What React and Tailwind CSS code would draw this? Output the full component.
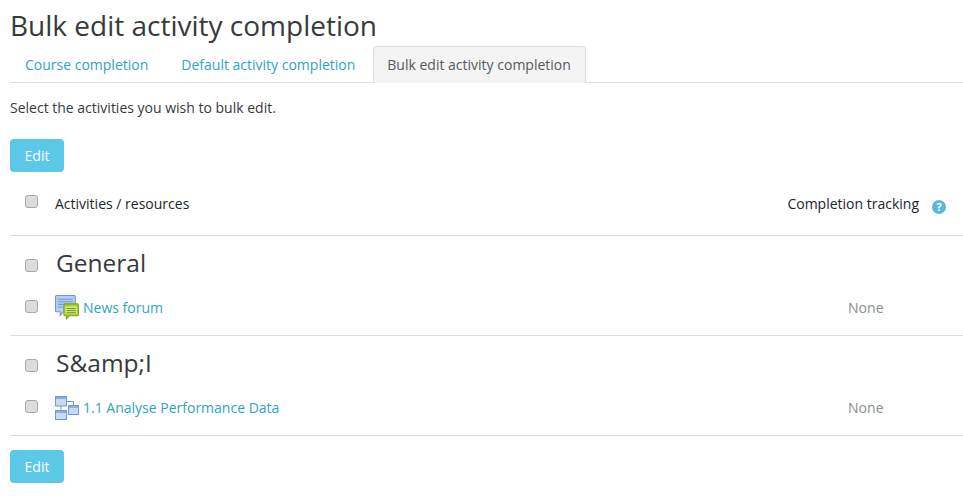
const Check = () => (
  <input type="checkbox" className="appearance-none block w-[13px] h-[13px] rounded-[3px] border border-[#a8a8a8] bg-[#dcdcdc] shrink-0" />
);

const ForumIcon = () => (
  <svg width="25" height="25" viewBox="0 0 24 24" className="shrink-0">
    <path d="M1.500 0.500h17a1 1 0 0 1 1 1V15a1 1 0 0 1-1 1H8l-3 3.500V16H1.500a1 1 0 0 1-1-1V1.500a1 1 0 0 1 1-1z" fill="#b5cdf2" stroke="#6f97da" />
    <path d="M3 4h14M3 6.500h14M3 9h14M3 11.500h5" stroke="#6f97da" strokeWidth="1" />
    <path d="M9.500 8.500h12a1 1 0 0 1 1 1V19a1 1 0 0 1-1 1H13.500l-2.500 3v-3H9.500a1 1 0 0 1-1-1V9.500a1 1 0 0 1 1-1z" fill="#a6cf2e" stroke="#7fa51c" />
    <rect x="10" y="11" width="11" height="7" fill="#d5ea8a" />
    <path d="M11 13h9M11 15h9M11 17h9" stroke="#6d8f16" strokeWidth="0.900" />
  </svg>
);

const BookIcon = () => (
  <svg width="24" height="24" viewBox="0 0 24 24" className="shrink-0">
    <path d="M6 10v4M11 5.500h7.500V9" stroke="#6f97da" fill="none" />
    <rect x="0.500" y="0.500" width="11" height="9.500" fill="#c9d9f3" stroke="#6f97da" />
    <rect x="1" y="1" width="10" height="2" fill="#8aaee6" />
    <rect x="13.500" y="9.500" width="10" height="9" fill="#c9d9f3" stroke="#6f97da" />
    <rect x="14" y="10" width="9" height="2" fill="#8aaee6" />
    <rect x="0.500" y="14.500" width="11" height="9" fill="#c9d9f3" stroke="#6f97da" />
    <rect x="1" y="15" width="10" height="2" fill="#8aaee6" />
  </svg>
);

const Help = () => (
  <span className="w-[14px] h-[14px] rounded-full bg-[#5bb8da] text-white text-[11px] leading-[14px] font-bold text-center block">?</span>
);

const EditButton = () => (
  <button className="block w-[54px] h-[33px] rounded-[4px] bg-[#5bc8e8] text-white text-[14px] font-normal">Edit</button>
);

const Section = ({ title, icon, label, gap }) => (
  <div className="border-b border-[#dedede]">
    <div className="flex items-center h-[56px] pl-[15px]">
      <div className="mt-[2px]"><Check /></div>
      <h3 className="ml-[18px] -mt-[2px] text-[24.5px] leading-[32px] text-[#373a3c]">{title}</h3>
    </div>
    <div className="flex items-center h-[43px] pb-[12px] pl-[15px]">
      <div className="-mt-[2px]"><Check /></div>
      <div className={gap ? "ml-[17px] flex items-center gap-[4px]" : "ml-[17px] flex items-center gap-[3px]"}>
        {icon}
        <a className="text-[14px] text-[#2fa4c7]">{label}</a>
      </div>
      <span className="ml-auto mr-[79.500px] text-[14px] text-[#868e96]">None</span>
    </div>
  </div>
);

export default function App() {
  return (
    <div className="w-[963px] h-[501px] overflow-hidden bg-white pl-[10px] text-[#373a3c] font-['Open_Sans',sans-serif]">
      <h2 className="pt-[7px] h-[46px] text-[28px] leading-[36px] text-[#373a3c]">Bulk edit activity completion</h2>
      <nav className="flex h-[37px] border-b border-[#dedede] text-[14px]">
        <a className="px-[15px] leading-[37px] text-[#2fa4c7]">Course completion</a>
        <a className="ml-[3px] px-[15px] leading-[37px] text-[#2fa4c7]">Default activity completion</a>
        <a className="ml-[3px] pl-[13px] pr-[14px] h-[37px] leading-[35px] text-[#55595c] bg-[#f4f4f4] border border-b-0 border-[#dedede] rounded-t-[4px]">Bulk edit activity completion</a>
      </nav>
      <p className="mt-[14px] text-[14px] leading-[21px]">Select the activities you wish to bulk edit.</p>
      <div className="mt-[21px]"><EditButton /></div>
      <div className="mt-[6px]">
        <div className="flex items-center h-[58px] pb-[6px] pl-[15px] border-b border-[#dedede]">
          <div className="-mt-[5px]"><Check /></div>
          <span className="ml-[17px] text-[14px] font-medium text-[#212529]">Activities / resources</span>
          <span className="ml-auto text-[14px] font-medium text-[#212529]">Completion tracking</span>
          <span className="ml-[13px] mr-[17px] mt-[6px]"><Help /></span>
        </div>
        <Section title="General" icon={<ForumIcon />} label="News forum" />
        <Section title="S&amp;amp;I" icon={<BookIcon />} label="1.1 Analyse Performance Data" gap />
      </div>
      <div className="mt-[14px]"><EditButton /></div>
    </div>
  );
}
